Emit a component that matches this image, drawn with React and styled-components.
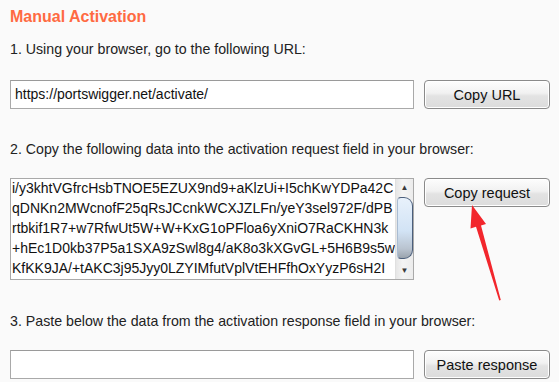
import styled, { createGlobalStyle } from "styled-components";

const GlobalStyle = createGlobalStyle`
  html, body {
    margin: 0;
    padding: 0;
    background: #fafafa;
    overflow: hidden;
  }
  body {
    font-family: "Liberation Sans", Arial, sans-serif;
    color: #222;
  }
`;

const requestLines = [
  "i/y3khtVGfrcHsbTNOE5EZUX9nd9+aKlzUi+I5chKwYDPa42C",
  "qDNKn2MWcnofF25qRsJCcnkWCXJZLFn/yeY3sel972F/dPB",
  "rtbkif1R7+w7RfwUt5W+W+KxG1oPFloa6yXniO7RaCKHN3k",
  "+hEc1D0kb37P5a1SXA9zSwl8g4/aK8o3kXGvGL+5H6B9s5w",
  "KfKK9JA/+tAKC3j95Jyy0LZYIMfutVplVtEHFfhOxYyzP6sH2I",
];

const Panel = styled.div`
  position: relative;
  width: 559px;
  height: 382px;
  padding: 7px 0 0 10px;
  box-sizing: border-box;
`;

const Title = styled.h2`
  margin: 0;
  font-size: 16px;
  line-height: 20px;
  font-weight: bold;
  color: #ff6a42;
`;

const Step = styled.p`
  margin: ${(p) => p.$top}px 0 0 0;
  font-size: 14.2px;
  line-height: 20px;
  color: #222;
`;

const Row = styled.div`
  display: flex;
  align-items: flex-start;
  gap: 10px;
  margin-top: ${(p) => p.$top}px;
`;

const Field = styled.div`
  width: 404px;
  height: 29px;
  box-sizing: border-box;
  background: #fff;
  border: 1px solid #a9a9a9;
  border-top-color: #9a9a9a;
  padding: 0 4px;
  font-size: 14px;
  line-height: 27px;
  color: #111;
`;

const Button = styled.button`
  width: 126px;
  height: 29px;
  box-sizing: border-box;
  border: 1px solid #8a8a8a;
  border-radius: 4px;
  background: linear-gradient(#fdfdfd 0%, #f1f1f1 45%, #e3e3e3 55%, #dcdcdc 100%);
  box-shadow: inset 0 0 0 1px #fff;
  font-family: "Liberation Sans", Arial, sans-serif;
  font-size: 14.5px;
  color: #111;
  padding: 0;
`;

const TextBox = styled.div`
  display: flex;
  width: 404px;
  height: 102px;
  box-sizing: border-box;
  background: #fff;
  border: 1px solid #a9a9a9;
  overflow: hidden;
`;

const TextLines = styled.div`
  flex: 1;
  overflow: hidden;
  padding: 0 0 0 1px;
  margin-top: -1px;
  font-size: 14px;
  line-height: 20px;
  color: #111;
  white-space: nowrap;
`;

const ScrollBar = styled.div`
  display: flex;
  flex-direction: column;
  align-items: center;
  width: 17px;
  flex: 0 0 17px;
  background: linear-gradient(90deg, #e6e6e6, #f4f4f4 40%, #ececec);
  border-left: 1px solid #e0e0e0;
`;

const ArrowBtn = styled.div`
  height: 17px;
  width: 100%;
  display: flex;
  align-items: center;
  justify-content: center;
  font-size: 8px;
  color: #3a3a3a;
`;

const Thumb = styled.div`
  width: 16px;
  height: 62px;
  margin-top: 1px;
  box-sizing: border-box;
  border: 1px solid #4b5f7c;
  border-left-color: #a9bcd2;
  border-radius: 4px 9px 9px 4px;
  background: linear-gradient(180deg, #e8f1fb 0%, #d2e3f5 55%, #b9c3cf 85%, #9aa3ad 100%);
`;

const Spacer = styled.div`
  flex: 1;
`;

const Pointer = styled.svg`
  position: absolute;
  left: 0;
  top: 0;
  pointer-events: none;
`;

export default function App() {
  return (
    <>
      <GlobalStyle />
      <Panel>
        <Title>Manual Activation</Title>
        <Step $top={12}>1. Using your browser, go to the following URL:</Step>
        <Row $top={21}>
          <Field>https://portswigger.net/activate/</Field>
          <Button>Copy URL</Button>
        </Row>
        <Step $top={30}>
          2. Copy the following data into the activation request field in your browser:
        </Step>
        <Row $top={19}>
          <TextBox>
            <TextLines>
              {requestLines.map((line) => (
                <div key={line}>{line}</div>
              ))}
            </TextLines>
            <ScrollBar>
              <ArrowBtn>▲</ArrowBtn>
              <Thumb />
              <Spacer />
              <ArrowBtn>▼</ArrowBtn>
            </ScrollBar>
          </TextBox>
          <Button>Copy request</Button>
        </Row>
        <Step $top={31}>
          3. Paste below the data from the activation response field in your browser:
        </Step>
        <Row $top={19}>
          <Field />
          <Button>Paste response</Button>
        </Row>
        <Pointer width="559" height="382" viewBox="0 0 559 382">
          <polygon
            points="472,205 486,224 481,225.5 500.8,300 499.2,300.4 476,226.8 470.5,228.4"
            fill="#f2262c"
          />
        </Pointer>
      </Panel>
    </>
  );
}
